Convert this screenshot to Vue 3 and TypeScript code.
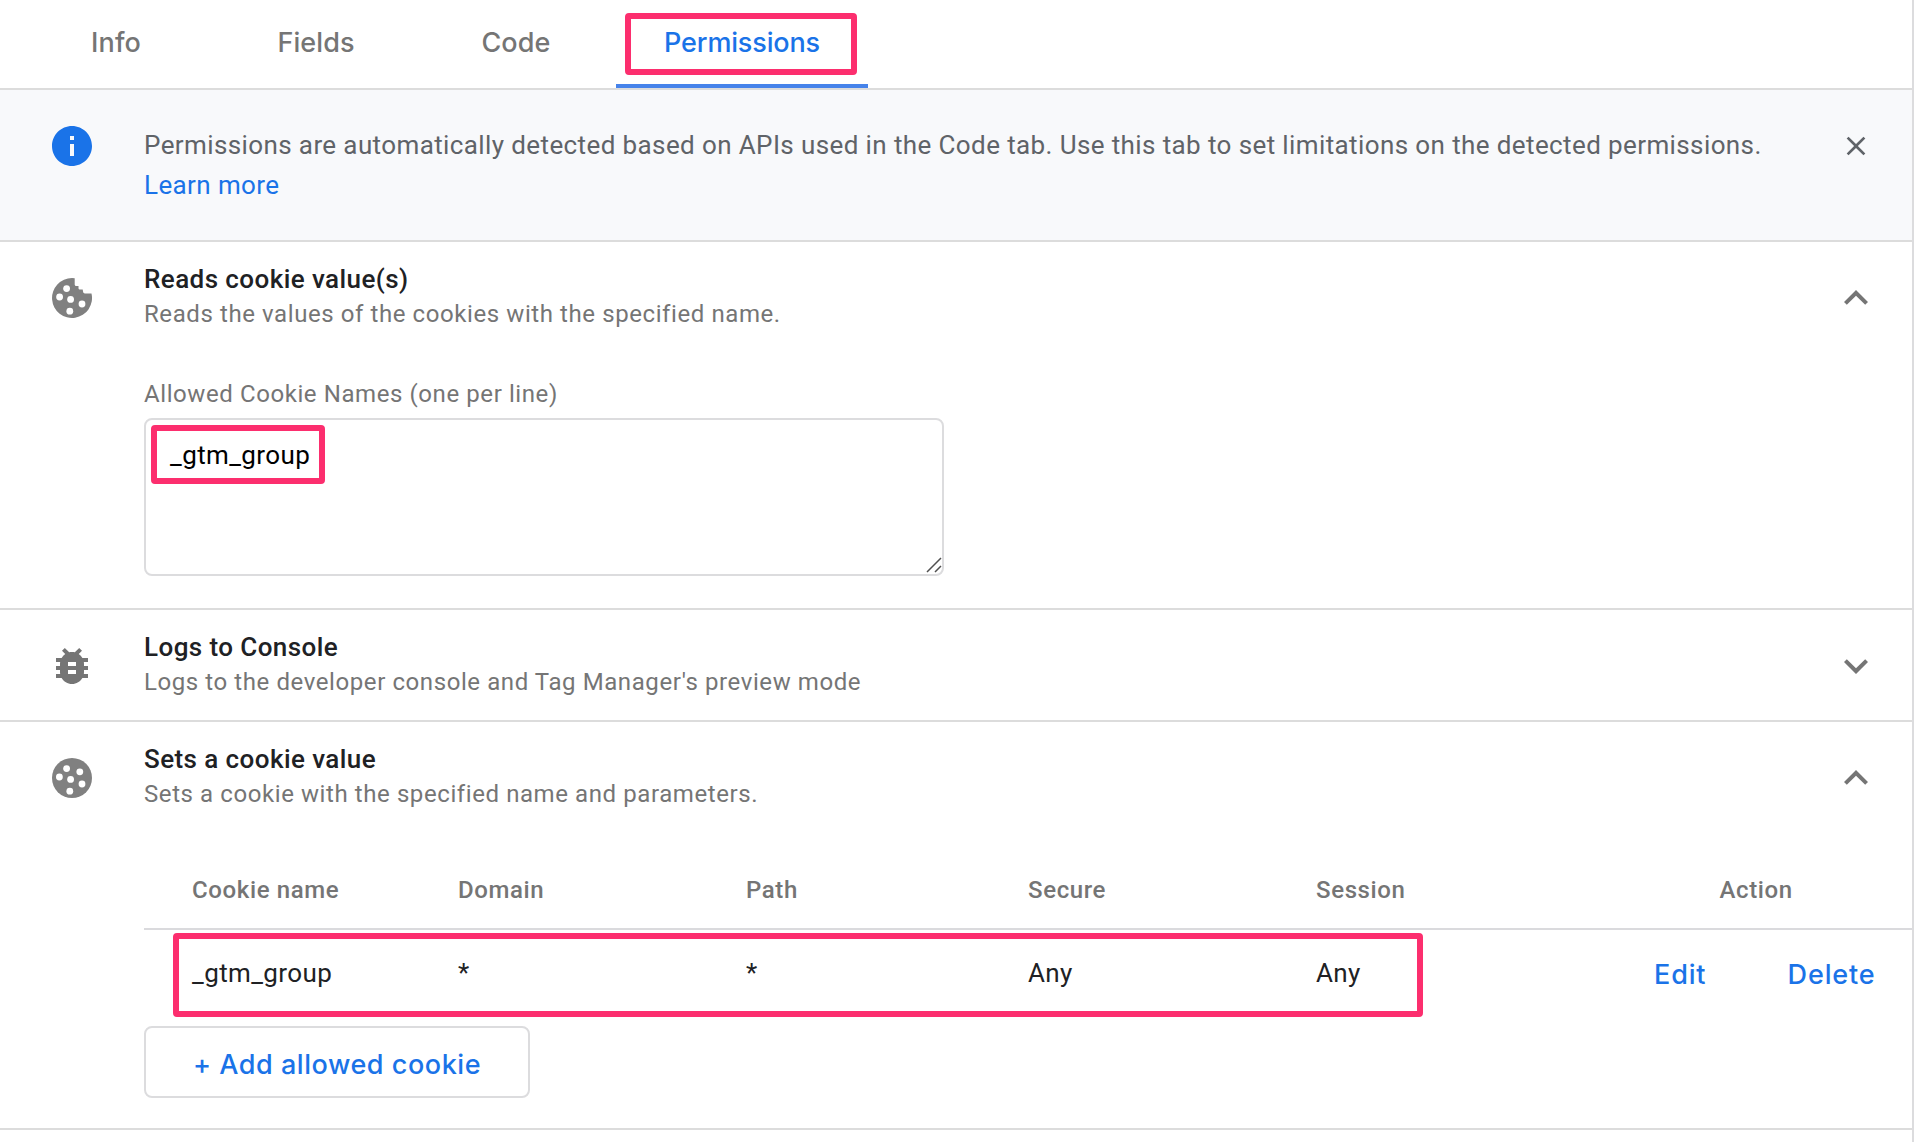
<script setup lang="ts">
import { ref } from 'vue'

interface CookieRule {
  name: string
  domain: string
  path: string
  secure: string
  session: string
}

const tabs: string[] = ['Info', 'Fields', 'Code', 'Permissions']
const activeTab = ref('Permissions')
const cookieNames = ref('_gtm_group')
const columns: string[] = ['Cookie name', 'Domain', 'Path', 'Secure', 'Session', 'Action']
const rules: CookieRule[] = [
  { name: '_gtm_group', domain: '*', path: '*', secure: 'Any', session: 'Any' },
]
</script>

<template>
  <main class="panel">
    <nav class="tabs">
      <button
        v-for="tab in tabs"
        :key="tab"
        class="tab"
        :class="{ active: tab === activeTab }"
        @click="activeTab = tab"
      >
        {{ tab }}
        <span v-if="tab === 'Permissions'" class="mark mark-tab"></span>
      </button>
    </nav>

    <section class="banner">
      <svg class="icon info" viewBox="0 0 24 24">
        <path d="M12 2C6.48 2 2 6.48 2 12s4.48 10 10 10 10-4.48 10-10S17.52 2 12 2zm1 15h-2v-6h2v6zm0-8h-2V7h2v2z" />
      </svg>
      <p class="banner-text">
        Permissions are automatically detected based on APIs used in the Code tab. Use this tab to set limitations on the detected permissions.<br />
        <a class="link">Learn more</a>
      </p>
      <svg class="close" viewBox="0 0 24 24">
        <path d="M19 6.41L17.59 5 12 10.59 6.41 5 5 6.41 10.59 12 5 17.59 6.41 19 12 13.41 17.59 19 19 17.59 13.41 12z" />
      </svg>
    </section>

    <section class="permission">
      <header class="head">
        <svg class="icon cookie" viewBox="0 0 24 24">
          <path d="M12 2a10 10 0 1 0 9.75 7.7h-3.3c-.5 0-.8-.3-.9-.8l-.2-1.1h-1.3c-.5 0-.8-.3-.8-.8V6h-1.1c-.5 0-.8-.4-.8-.9v-3A10 10 0 0 0 12 2z" />
          <g class="chips">
            <circle cx="9.3" cy="7.3" r="1.7" />
            <circle cx="5.8" cy="11.5" r="1.7" />
            <circle cx="11.3" cy="12.7" r="1.7" />
            <circle cx="17" cy="15" r="1.7" />
            <circle cx="10.9" cy="18.6" r="1.7" />
          </g>
        </svg>
        <div class="titles">
          <h2>Reads cookie value(s)</h2>
          <p>Reads the values of the cookies with the specified name.</p>
        </div>
        <svg class="chevron" viewBox="0 0 24 24">
          <path d="M12 8l-6 6 1.41 1.41L12 10.83l4.59 4.58L18 14z" />
        </svg>
      </header>
      <div class="body names">
        <label class="label">Allowed Cookie Names (one per line)</label>
        <div class="field">
          <textarea v-model="cookieNames" class="input" spellcheck="false"></textarea>
          <svg class="grip" viewBox="0 0 16 16">
            <path d="M1 15L15 1M9 15L15 9" />
          </svg>
          <span class="mark mark-input"></span>
        </div>
      </div>
    </section>

    <section class="permission">
      <header class="head">
        <svg class="icon" viewBox="0 0 24 24">
          <path d="M20 8h-2.81c-.45-.78-1.07-1.45-1.82-1.96L17 4.41 15.59 3l-2.17 2.17C12.96 5.06 12.49 5 12 5c-.49 0-.96.06-1.41.17L8.41 3 7 4.41l1.62 1.63C7.88 6.55 7.26 7.22 6.81 8H4v2h2.09c-.05.33-.09.66-.09 1v1H4v2h2v1c0 .34.04.67.09 1H4v2h2.81c1.04 1.79 2.97 3 5.19 3s4.15-1.21 5.19-3H20v-2h-2.09c.05-.33.09-.66.09-1v-1h2v-2h-2v-1c0-.34-.04-.67-.09-1H20V8zm-6 8h-4v-2h4v2zm0-4h-4v-2h4v2z" />
        </svg>
        <div class="titles">
          <h2>Logs to Console</h2>
          <p>Logs to the developer console and Tag Manager's preview mode</p>
        </div>
        <svg class="chevron" viewBox="0 0 24 24">
          <path d="M16.59 8.59L12 13.17 7.41 8.59 6 10l6 6 6-6z" />
        </svg>
      </header>
    </section>

    <section class="permission">
      <header class="head">
        <svg class="icon cookie" viewBox="0 0 24 24">
          <circle cx="12" cy="12" r="10" />
          <g class="chips">
            <circle cx="9.3" cy="7.3" r="1.7" />
            <circle cx="15.9" cy="8.9" r="1.7" />
            <circle cx="5.7" cy="11.5" r="1.7" />
            <circle cx="11.3" cy="12.7" r="1.7" />
            <circle cx="17" cy="15" r="1.7" />
            <circle cx="10.9" cy="18.6" r="1.7" />
          </g>
        </svg>
        <div class="titles">
          <h2>Sets a cookie value</h2>
          <p>Sets a cookie with the specified name and parameters.</p>
        </div>
        <svg class="chevron" viewBox="0 0 24 24">
          <path d="M12 8l-6 6 1.41 1.41L12 10.83l4.59 4.58L18 14z" />
        </svg>
      </header>
      <div class="body rules">
        <div class="row header-row">
          <span v-for="column in columns" :key="column">{{ column }}</span>
        </div>
        <div v-for="rule in rules" :key="rule.name" class="row rule-row">
          <span>{{ rule.name }}</span>
          <span>{{ rule.domain }}</span>
          <span>{{ rule.path }}</span>
          <span>{{ rule.secure }}</span>
          <span>{{ rule.session }}</span>
          <div class="actions">
            <a>Edit</a>
            <a>Delete</a>
          </div>
          <span class="mark mark-row"></span>
        </div>
        <button class="add">+ Add allowed cookie</button>
      </div>
    </section>
  </main>
</template>

<style>
body {
  margin: 0;
  background: #fff;
}
</style>

<style scoped>
.panel {
  box-sizing: border-box;
  width: 1914px;
  height: 1142px;
  overflow: hidden;
  border-right: 2px solid #dcdcde;
  background: #fff;
  font-family: Roboto, "Noto Sans", sans-serif;
  font-size: 26px;
  letter-spacing: 0.4px;
  color: #202124;
}

h2,
p {
  margin: 0;
}

button {
  margin: 0;
  background: none;
  cursor: pointer;
}

.tabs {
  display: flex;
  height: 88px;
  padding-left: 16px;
  border-bottom: 2px solid #dcdcdc;
}

.tab {
  position: relative;
  box-sizing: border-box;
  min-width: 200px;
  padding: 1px 48px 0;
  border: 0;
  border-bottom: 4px solid transparent;
  font: 500 27px/83px Inter, sans-serif;
  letter-spacing: 0.1px;
  color: #757575;
}

.tab.active {
  width: 252px;
  border-bottom-color: #4683ea;
  letter-spacing: -0.15px;
  color: #1a73e8;
}

.mark {
  position: absolute;
  box-sizing: border-box;
  border: 6px solid #fc2e6e;
  border-radius: 4px;
  pointer-events: none;
}

.mark-tab {
  left: 9px;
  top: 13px;
  width: 232px;
  height: 62px;
}

.banner {
  display: flex;
  box-sizing: border-box;
  height: 152px;
  padding-left: 48px;
  border-bottom: 2px solid #dcdcdc;
  background: #f8f9fb;
}

.icon {
  flex: none;
  width: 48px;
  height: 48px;
  margin-top: 32px;
  fill: #757575;
}

.icon.info {
  fill: #1a73e8;
}

.icon.cookie {
  fill: #808080;
}

.chips {
  fill: #fff;
}

.banner-text {
  flex: 1;
  margin: 35px 0 0 48px;
  line-height: 40px;
  letter-spacing: 0.39px;
  color: #5f6368;
  white-space: nowrap;
}

.link {
  color: #1a73e8;
}

.close {
  width: 32px;
  height: 32px;
  margin: 40px 40px 0 0;
  fill: #5f6368;
}

.permission {
  border-bottom: 2px solid #dcdcdc;
}

.head {
  display: flex;
  height: 110px;
  padding-left: 48px;
}

.titles {
  flex: 1;
  margin: 19px 0 0 48px;
}

.titles h2 {
  font-size: 26px;
  font-weight: 500;
  line-height: 36px;
  letter-spacing: 0.42px;
}

.titles p {
  margin-top: 1px;
  font-size: 24px;
  line-height: 32px;
  letter-spacing: 0.585px;
  color: #757575;
}

.chevron {
  width: 48px;
  height: 48px;
  margin: 32px 32px 0 0;
  fill: #757575;
}

.body {
  padding-left: 144px;
}

.names {
  padding-top: 26px;
  padding-bottom: 32px;
}

.label {
  display: block;
  font-size: 24px;
  line-height: 32px;
  letter-spacing: 0.585px;
  color: #757575;
}

.field {
  position: relative;
  width: 800px;
  height: 158px;
  margin-top: 8px;
}

.input {
  display: block;
  box-sizing: border-box;
  width: 100%;
  height: 100%;
  margin: 0;
  padding: 15px 24px;
  border: 2px solid #dcdcde;
  border-radius: 8px;
  outline: none;
  resize: none;
  overflow: hidden;
  background: #fff;
  font: 400 26px/40px Roboto, sans-serif;
  letter-spacing: 0.4px;
  color: #000;
}

.grip {
  position: absolute;
  right: 2.5px;
  bottom: 3.5px;
  width: 16px;
  height: 16px;
  fill: none;
  stroke: #505050;
  stroke-width: 1.5;
}

.mark-input {
  left: 7px;
  top: 7px;
  width: 173.5px;
  height: 59px;
}

.rules {
  padding-top: 20px;
  padding-bottom: 30px;
}

.row {
  display: grid;
  grid-template-columns: 266px 288px 282px 288px 284px 1fr;
  align-items: center;
  padding-left: 48px;
}

.header-row {
  height: 76px;
  border-bottom: 2px solid #dadadd;
  font-size: 24px;
  font-weight: 500;
  letter-spacing: 0.62px;
  color: #757575;
}

.header-row span:last-child {
  padding-left: 119.5px;
}

.rule-row {
  position: relative;
  box-sizing: border-box;
  height: 84px;
  padding-top: 4px;
  padding-bottom: 2px;
  margin-bottom: 12px;
}

.actions {
  display: flex;
  justify-content: space-between;
  padding: 4px 36.5px 0 54px;
  font: 500 27px/40px Inter, sans-serif;
  letter-spacing: 0.85px;
  color: #1a73e8;
}

.mark-row {
  left: 28.5px;
  top: 3px;
  width: 1250.5px;
  height: 84px;
}

.add {
  display: block;
  box-sizing: border-box;
  width: 386px;
  height: 72px;
  padding: 6px 0 0;
  border: 2px solid #dcdcde;
  border-radius: 8px;
  font: 500 27px/40px Inter, sans-serif;
  letter-spacing: 0.55px;
  color: #1a73e8;
}
</style>
